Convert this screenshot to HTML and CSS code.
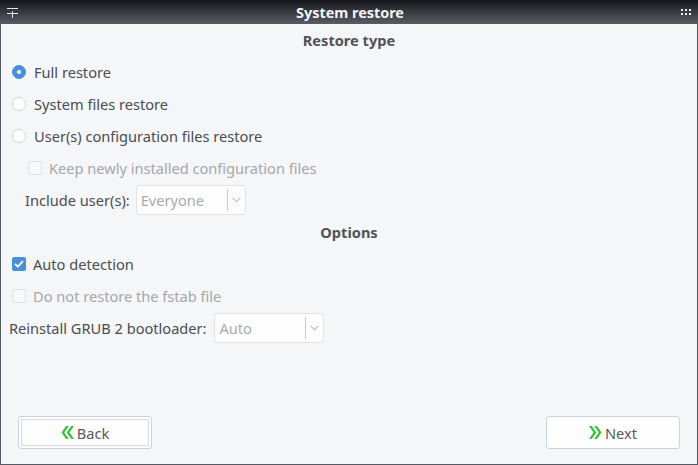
FILE: index.html
```html
<!DOCTYPE html>
<html>
<head>
<meta charset="utf-8">
<link rel="stylesheet" href="styles.css">
</head>
<body>
<div class="window">
  <div class="titlebar">
    <svg class="tb-left" width="12" height="10" viewBox="0 0 12 10"><rect x="0" y="0" width="11" height="1" fill="#e8e9eb"/><rect x="0" y="5" width="11" height="1" fill="#e8e9eb"/><rect x="5" y="3" width="1" height="7" fill="#e8e9eb"/></svg>
    <div class="title">System restore</div>
    <svg class="tb-right" width="10" height="8" viewBox="0 0 10 8"><g fill="#f0f0f2"><rect x="0" y="1" width="2" height="2"/><rect x="4" y="1" width="2" height="2"/><rect x="8" y="1" width="2" height="2"/><rect x="0" y="5" width="2" height="2"/><rect x="4" y="5" width="2" height="2"/><rect x="8" y="5" width="2" height="2"/></g></svg>
  </div>
  <div class="content">
    <div class="heading">Restore type</div>
    <div class="row pad12"><span class="radio checked"></span><span class="lbl">Full restore</span></div>
    <div class="row pad12"><span class="radio"></span><span class="lbl">System files restore</span></div>
    <div class="row pad12"><span class="radio"></span><span class="lbl">User(s) configuration files restore</span></div>
    <div class="row pad28 disabled"><span class="check"></span><span class="lbl lbl8">Keep newly installed configuration files</span></div>
    <div class="row pad25"><span class="field-label tight">Include user(s):</span>
      <div class="combo"><span class="combo-text">Everyone</span><span class="combo-sep"></span><svg class="chev" width="9" height="6" viewBox="0 0 9 6"><path d="M0.5 0.8 L4.5 4.8 L8.5 0.8" fill="none" stroke="#9a9ea5" stroke-width="1"/></svg></div>
    </div>
    <div class="heading">Options</div>
    <div class="row pad12"><span class="check checked"><svg width="10" height="8" viewBox="0 0 10 8"><path d="M1 4 L3.8 6.6 L9 1.2" fill="none" stroke="#fff" stroke-width="1.8"/></svg></span><span class="lbl lbl8">Auto detection</span></div>
    <div class="row pad12 disabled"><span class="check"></span><span class="lbl lbl8">Do not restore the fstab file</span></div>
    <div class="row pad9"><span class="field-label">Reinstall GRUB 2 bootloader:</span>
      <div class="combo"><span class="combo-text">Auto</span><span class="combo-sep"></span><svg class="chev" width="9" height="6" viewBox="0 0 9 6"><path d="M0.5 0.8 L4.5 4.8 L8.5 0.8" fill="none" stroke="#9a9ea5" stroke-width="1"/></svg></div>
    </div>
    <div class="spacer"></div>
    <div class="footer">
      <button class="btn focused"><svg width="13" height="13" viewBox="0 0 13 13"><path d="M5 0 L0.5 6.5 L5 13 L7.8 13 L3.3 6.5 L7.8 0 Z M10.2 0 L5.7 6.5 L10.2 13 L13 13 L8.5 6.5 L13 0 Z" fill="#3cc13c"/></svg><span>Back</span></button>
      <button class="btn"><svg width="13" height="13" viewBox="0 0 13 13"><path d="M8 0 L12.5 6.5 L8 13 L5.2 13 L9.7 6.5 L5.2 0 Z M2.8 0 L7.3 6.5 L2.8 13 L0 13 L4.5 6.5 L0 0 Z" fill="#3cc13c"/></svg><span>Next</span></button>
    </div>
  </div>
</div>
</body>
</html>
```
FILE: styles.css
```css
html, body {
  margin: 0;
  padding: 0;
}
body {
  width: 698px;
  height: 465px;
  overflow: hidden;
  font-family: "Noto Sans", "Open Sans", sans-serif;
  font-size: 14.6px;
  color: #4a4d53;
}
.window {
  width: 698px;
  height: 465px;
  box-sizing: border-box;
  display: flex;
  flex-direction: column;
  background: #f5f6f8;
  border-left: 1px solid #555963;
  border-right: 1px solid #555963;
  border-bottom: 1px solid #555963;
}
.titlebar {
  height: 24px;
  flex: 0 0 24px;
  margin: 0 -1px;
  display: flex;
  align-items: center;
  justify-content: space-between;
  padding: 0 7px;
  background: linear-gradient(#15161a 0%, #2e3035 35%, #4b4e55 80%, #595c64 100%);
}
.tb-left { margin-top: 1px; }
.title {
  color: #f4f4f6;
  font-weight: bold;
  font-size: 14.4px;
}
.content {
  flex: 1;
  display: flex;
  flex-direction: column;
}
.heading {
  height: 32px;
  display: flex;
  align-items: center;
  justify-content: center;
  font-weight: bold;
  font-size: 14.6px;
  color: #4e525a;
}
.row {
  height: 32px;
  display: flex;
  align-items: center;
}
.pad12 { padding-left: 11px; }
.pad28 { padding-left: 27px; }
.pad25 { padding-left: 24px; }
.pad9 { padding-left: 8px; }
.radio {
  width: 12px;
  height: 12px;
  border: 1px solid #d2d5da;
  border-radius: 50%;
  background: #fff;
  display: flex;
  align-items: center;
  justify-content: center;
}
.radio.checked {
  background: #4a90d9;
  border-color: #4a90d9;
}
.radio.checked::after {
  content: "";
  width: 4px;
  height: 4px;
  border-radius: 50%;
  background: #fff;
}
.check {
  width: 12px;
  height: 12px;
  border: 1px solid #d8dbe0;
  border-radius: 2px;
  background: #fbfbfc;
  display: flex;
  align-items: center;
  justify-content: center;
}
.check.checked {
  background: #4a90d9;
  border-color: #4a90d9;
}
.lbl {
  margin-left: 8px;
}
.lbl8 { margin-left: 7px; }
.disabled { color: #a4a7ac; }
.disabled .check { background: #f7f8f9; border-color: #e0e2e6; }
.field-label {
  margin-right: 8px;
  white-space: nowrap;
}
.field-label.tight { margin-right: 6px; }
.combo {
  width: 110px;
  flex: 0 0 110px;
  height: 30px;
  box-sizing: border-box;
  border: 1px solid #dfe2e7;
  border-radius: 3px;
  background: #fdfdfd;
  display: flex;
  align-items: center;
}
.combo-text {
  color: #a8abb0;
  padding-left: 4px;
  flex: 1;
}
.combo-sep {
  width: 1px;
  height: 22px;
  background: #c6c9ce;
  margin-right: 4px;
}
.chev { margin-right: 4px; }
.spacer { flex: 1; }
.footer {
  display: flex;
  justify-content: space-between;
  padding: 0 17px 15px 17px;
}
.btn {
  width: 134px;
  height: 33px;
  box-sizing: border-box;
  border: 1px solid #cdd2dd;
  border-radius: 3px;
  background: #fdfdfe;
  font-family: inherit;
  font-size: 14.6px;
  color: #555960;
  display: flex;
  align-items: center;
  justify-content: center;
  gap: 3px;
  padding: 0;
}
.btn.focused {
  box-shadow: inset 0 0 0 2px #fdfdfe, inset 0 0 0 3px #d6dae3;
}
```
